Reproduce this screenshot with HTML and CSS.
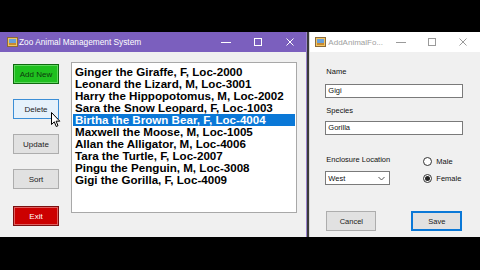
FILE: index.html
```html
<!DOCTYPE html>
<html>
<head>
<meta charset="utf-8">
<link rel="stylesheet" href="styles.css">
</head>
<body>
<div class="band"></div>
<div class="desk">
  <div class="win main">
    <div class="titlebar">
      <svg class="appicon" width="11" height="10" viewBox="0 0 11 10">
        <rect x="0.5" y="0.5" width="10" height="9" fill="#f3c562" stroke="#8a6a3a"/>
        <rect x="2" y="2" width="7" height="4" fill="#6aa0d8"/>
        <rect x="2" y="6" width="7" height="2" fill="#c98a2e"/>
      </svg>
      <span class="title">Zoo Animal Management System</span>
      <div class="ctrls">
        <span class="ctrl"><svg width="10" height="10" viewBox="0 0 10 10"><line x1="0" y1="5.5" x2="10" y2="5.5" stroke="#fff" stroke-width="1"/></svg></span>
        <span class="ctrl"><svg width="10" height="10" viewBox="0 0 10 10"><rect x="1.5" y="1.5" width="7" height="7" fill="none" stroke="#fff" stroke-width="1"/></svg></span>
        <span class="ctrl"><svg width="10" height="10" viewBox="0 0 10 10"><path d="M1.5 1.5 L8.5 8.5 M8.5 1.5 L1.5 8.5" stroke="#fff" stroke-width="1"/></svg></span>
      </div>
    </div>
    <div class="mbody">
      <div class="btncol">
        <div class="btn green">Add New</div>
        <div class="btn focus">Delete</div>
        <div class="btn">Update</div>
        <div class="btn">Sort</div>
        <div class="btn red">Exit</div>
      </div>
      <div class="listbox">
        <div class="item">Ginger the Giraffe, F, Loc-2000</div>
        <div class="item">Leonard the Lizard, M, Loc-3001</div>
        <div class="item">Harry the Hippopotomus, M, Loc-2002</div>
        <div class="item">Sara the Snow Leopard, F, Loc-1003</div>
        <div class="item sel">Birtha the Brown Bear, F, Loc-4004</div>
        <div class="item">Maxwell the Moose, M, Loc-1005</div>
        <div class="item">Allan the Alligator, M, Loc-4006</div>
        <div class="item">Tara the Turtle, F, Loc-2007</div>
        <div class="item">Pingu the Penguin, M, Loc-3008</div>
        <div class="item">Gigi the Gorilla, F, Loc-4009</div>
      </div>
    </div>
    <svg class="cursor" width="10" height="16" viewBox="0 0 10 16">
      <path d="M0.5 0.5 L0.5 12.5 L3.3 9.8 L5.2 14.5 L7 13.7 L5.1 9.2 L8.8 9.2 Z" fill="#fff" stroke="#000" stroke-width="1" stroke-linejoin="round"/>
    </svg>
  </div>
  <div class="sep"></div>
  <div class="win dlg">
    <div class="titlebar light">
      <svg class="appicon" width="11" height="10" viewBox="0 0 11 10">
        <rect x="0.5" y="0.5" width="10" height="9" fill="#f3c562" stroke="#8a6a3a"/>
        <rect x="2" y="2" width="7" height="4" fill="#6aa0d8"/>
        <rect x="2" y="6" width="7" height="2" fill="#c98a2e"/>
      </svg>
      <span class="title dim">AddAnimalFo...</span>
      <div class="ctrls">
        <span class="ctrl"><svg width="10" height="10" viewBox="0 0 10 10"><line x1="0" y1="5.5" x2="10" y2="5.5" stroke="#9a9a9a" stroke-width="1"/></svg></span>
        <span class="ctrl"><svg width="10" height="10" viewBox="0 0 10 10"><rect x="1.5" y="1.5" width="7" height="7" fill="none" stroke="#9a9a9a" stroke-width="1"/></svg></span>
        <span class="ctrl"><svg width="10" height="10" viewBox="0 0 10 10"><path d="M1.5 1.5 L8.5 8.5 M8.5 1.5 L1.5 8.5" stroke="#9a9a9a" stroke-width="1"/></svg></span>
      </div>
    </div>
    <div class="dbody">
      <div class="lbl">Name</div>
      <div class="tb first">Gigi</div>
      <div class="lbl l2">Species</div>
      <div class="tb">Gorilla</div>
      <div class="row">
        <div class="lcol">
          <div class="lbl">Enclosure Location</div>
          <div class="combo"><span>West</span>
            <svg width="7" height="5" viewBox="0 0 7 5"><path d="M0.5 1 L3.5 4 L6.5 1" fill="none" stroke="#555" stroke-width="1"/></svg>
          </div>
        </div>
        <div class="rcol">
          <div class="radio"><span class="circ"></span><span>Male</span></div>
          <div class="radio"><span class="circ on"></span><span>Female</span></div>
        </div>
      </div>
      <div class="brow">
        <div class="dbtn">Cancel</div>
        <div class="dbtn save">Save</div>
      </div>
    </div>
  </div>
</div>
</body>
</html>
```
FILE: styles.css
```css
html, body {
  margin: 0;
  padding: 0;
}
body {
  background: #000;
  width: 480px;
  height: 270px;
  overflow: hidden;
  font-family: "Liberation Sans", Arial, sans-serif;
}
.band {
  height: 32px;
}
.desk {
  display: flex;
  height: 205px;
}
.win {
  background: #f0f0f0;
  display: flex;
  flex-direction: column;
  position: relative;
}
.main {
  width: 307px;
  border-right: 1px solid #9a84cc;
}
.sep {
  width: 2px;
  background: #3a3a3a;
}
.dlg {
  width: 170px;
  border-left: 1px solid #d8d8d8;
}
.titlebar {
  height: 20px;
  background: #7b5fbe;
  display: flex;
  align-items: center;
  padding-left: 7px;
}
.titlebar.light {
  background: #fff;
  padding-left: 5px;
}
.appicon {
  flex: none;
}
.title {
  color: #fff;
  font-size: 8.3px;
  margin-left: 1px;
  white-space: nowrap;
}
.title.dim {
  color: #a0a0a0;
  font-size: 8px;
  margin-left: 2px;
}
.ctrls {
  margin-left: auto;
  display: flex;
}
.ctrl {
  width: 32px;
  height: 20px;
  display: flex;
  align-items: center;
  justify-content: center;
}
.dlg .ctrl {
  width: 31px;
}
.dlg .ctrls {
  margin-right: 2px;
}
.mbody {
  display: flex;
  padding: 10px 0 0 13px;
}
.btncol {
  display: flex;
  flex-direction: column;
  gap: 15px;
  margin-top: 2px;
  width: 46px;
}
.btn {
  height: 20px;
  box-sizing: border-box;
  border: 1px solid #adadad;
  background: #e1e1e1;
  font-size: 8px;
  color: #222;
  display: flex;
  align-items: center;
  justify-content: center;
}
.btn.green {
  background: #1fc01f;
  border: 1px solid #0f6a0f;
  color: #0e3a0e;
  box-shadow: inset 0 0 0 1px #5fd85f;
}
.btn.focus {
  background: #e5f1fb;
  border: 1px solid #3c8ed6;
}
.btn.red {
  background: #cc0000;
  border: 1px solid #7a1010;
  color: #fff;
  margin-top: 2px;
  box-shadow: inset 0 0 0 1px #e06060;
}
.listbox {
  margin-left: 12px;
  width: 226px;
  height: 151px;
  box-sizing: border-box;
  border: 1px solid #a8a8a8;
  background: #fff;
  padding: 3px 1px 0 1px;
}
.item {
  height: 12px;
  line-height: 12px;
  font-size: 11.6px;
  font-weight: bold;
  color: #000;
  padding-left: 2px;
  white-space: nowrap;
}
.item.sel {
  background: #0a78d7;
  color: #fff;
}
.cursor {
  position: absolute;
  left: 51px;
  top: 80px;
}
.dbody {
  padding: 15px 0 0 15px;
  display: flex;
  flex-direction: column;
  font-size: 7.5px;
  color: #111;
}
.lbl {
  height: 10px;
  line-height: 10px;
  margin-left: 1px;
  white-space: nowrap;
}
.lbl.l2 {
  margin-top: 8px;
}
.tb {
  margin-top: 5px;
  width: 138px;
  height: 14px;
  box-sizing: border-box;
  border: 1px solid #7a7a7a;
  background: #fff;
  line-height: 12px;
  padding-left: 2px;
}
.tb.first {
  margin-top: 7px;
}
.row {
  display: flex;
  margin-top: 20px;
}
.lcol {
  display: flex;
  flex-direction: column;
  width: 98px;
}
.combo {
  margin-top: 6px;
  width: 65px;
  height: 14px;
  box-sizing: border-box;
  border: 1px solid #7a7a7a;
  background: #fff;
  display: flex;
  align-items: center;
  justify-content: space-between;
  padding: 0 4px 0 2px;
}
.rcol {
  display: flex;
  flex-direction: column;
  gap: 7px;
  margin-top: 1px;
}
.radio {
  display: flex;
  align-items: center;
  height: 10px;
  gap: 4px;
}
.circ {
  width: 9px;
  height: 9px;
  box-sizing: border-box;
  border: 1px solid #333;
  border-radius: 50%;
  background: #fff;
  display: flex;
  align-items: center;
  justify-content: center;
}
.circ.on::after {
  content: "";
  width: 5px;
  height: 5px;
  border-radius: 50%;
  background: #222;
}
.brow {
  display: flex;
  margin-top: 26px;
  margin-left: 1px;
}
.dbtn {
  width: 50px;
  height: 20px;
  box-sizing: border-box;
  border: 1px solid #adadad;
  background: #e1e1e1;
  display: flex;
  align-items: center;
  justify-content: center;
  color: #222;
}
.dbtn.save {
  margin-left: 35px;
  width: 51px;
  border: 2px solid #0a78d7;
}
```
